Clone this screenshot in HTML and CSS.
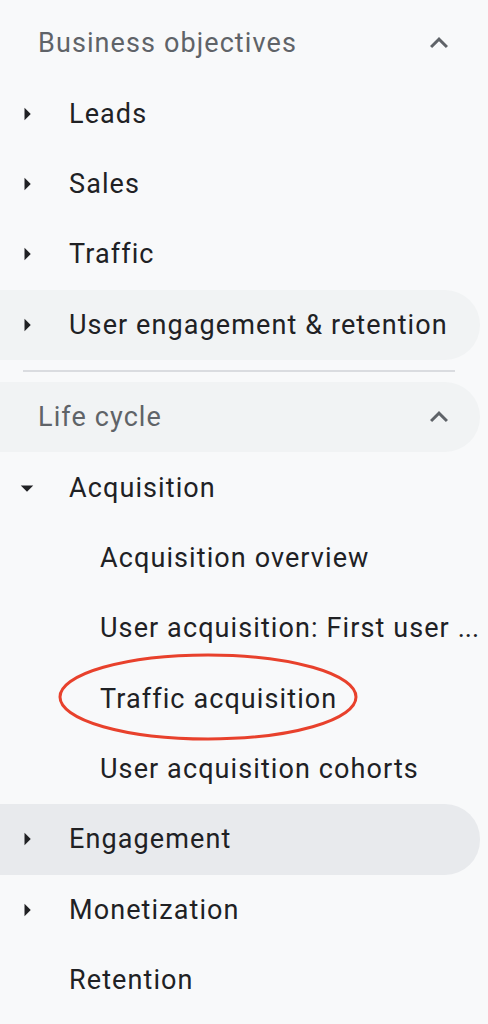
FILE: index.html
```html
<!DOCTYPE html>
<html lang="en">
<head>
<meta charset="utf-8">
<title>Reports navigation</title>
<link rel="stylesheet" href="styles.css">
</head>
<body>
<nav class="nav">
  <div class="section-header">
    <span class="section-title">Business objectives</span>
    <svg class="chevron" viewBox="0 0 24 24"><path d="M12 8l-6 6 1.41 1.41L12 10.83l4.59 4.58L18 14z"/></svg>
  </div>
  <div class="item"><svg class="caret" viewBox="0 0 24 24"><path d="M10 17l5-5-5-5v10z"/></svg><span class="label">Leads</span></div>
  <div class="item"><svg class="caret" viewBox="0 0 24 24"><path d="M10 17l5-5-5-5v10z"/></svg><span class="label">Sales</span></div>
  <div class="item"><svg class="caret" viewBox="0 0 24 24"><path d="M10 17l5-5-5-5v10z"/></svg><span class="label">Traffic</span></div>
  <div class="item hover"><svg class="caret" viewBox="0 0 24 24"><path d="M10 17l5-5-5-5v10z"/></svg><span class="label">User engagement &amp; retention</span></div>
  <div class="divider"></div>
  <div class="section-header hover">
    <span class="section-title">Life cycle</span>
    <svg class="chevron" viewBox="0 0 24 24"><path d="M12 8l-6 6 1.41 1.41L12 10.83l4.59 4.58L18 14z"/></svg>
  </div>
  <div class="item"><svg class="caret" viewBox="0 0 24 24"><path d="M7 10l5 5 5-5z"/></svg><span class="label">Acquisition</span></div>
  <div class="sub-item"><span class="label">Acquisition overview</span></div>
  <div class="sub-item"><span class="label">User acquisition: First user <span class="dots">...</span></span></div>
  <div class="sub-item"><span class="label">Traffic acquisition</span></div>
  <div class="sub-item"><span class="label">User acquisition cohorts</span></div>
  <div class="item active"><svg class="caret" viewBox="0 0 24 24"><path d="M10 17l5-5-5-5v10z"/></svg><span class="label">Engagement</span></div>
  <div class="item"><svg class="caret" viewBox="0 0 24 24"><path d="M10 17l5-5-5-5v10z"/></svg><span class="label">Monetization</span></div>
  <div class="item no-caret"><span class="label">Retention</span></div>
  <svg class="annotation" viewBox="0 0 310 96"><ellipse cx="155" cy="48" rx="148" ry="42"/></svg>
</nav>
</body>
</html>
```
FILE: styles.css
```css
html, body {
  margin: 0;
  padding: 0;
  background: #f8f9fa;
}
.nav {
  position: relative;
  width: 480px;
  padding-top: 8px;
  font-family: Roboto, "Liberation Sans", sans-serif;
  font-size: 27px;
  letter-spacing: 1.1px;
  color: #202124;
}
.section-header,
.item,
.sub-item {
  height: 70.4px;
  display: flex;
  align-items: center;
  box-sizing: border-box;
  border-radius: 0 35px 35px 0;
}
.section-header {
  justify-content: space-between;
  padding-left: 38px;
  padding-right: 23px;
}
.section-title {
  color: #5f6368;
}
.chevron {
  width: 36px;
  height: 36px;
  fill: #5f6368;
}
.item {
  padding-left: 12px;
}
.caret {
  width: 30px;
  height: 30px;
  fill: #202124;
  margin-right: 27px;
  flex: none;
}
.item.no-caret {
  padding-left: 69px;
}
.sub-item {
  padding-left: 100px;
  padding-right: 4px;
}
.label {
  white-space: nowrap;
}
.dots {
  letter-spacing: 0;
}
.hover {
  background: #f1f3f4;
}
.active {
  background: #e8eaed;
}
.divider {
  height: 2px;
  background: #dadce0;
  margin: 10px 25px 10px 23px;
}
.annotation {
  position: absolute;
  left: 53px;
  top: 649px;
  width: 310px;
  height: 96px;
  fill: none;
  stroke: #e8412c;
  stroke-width: 3px;
}
```
